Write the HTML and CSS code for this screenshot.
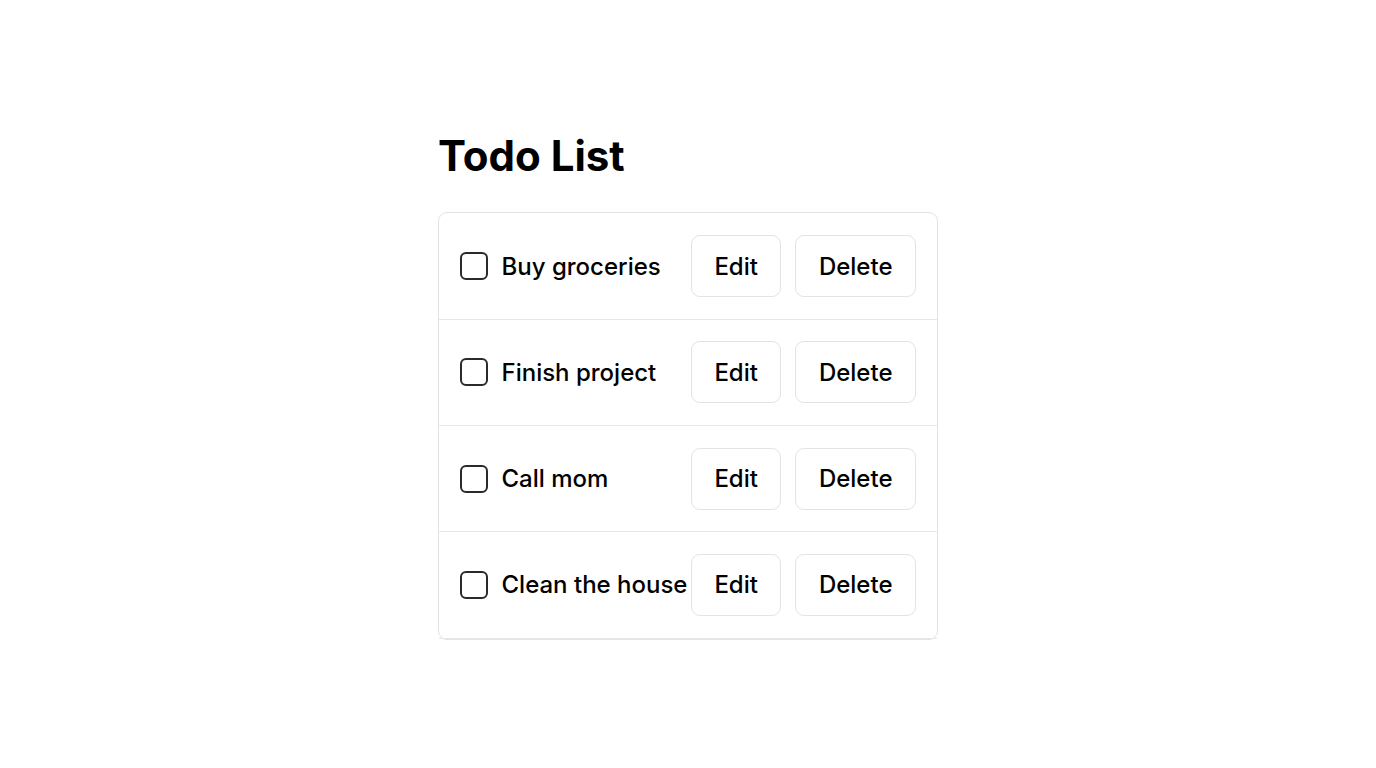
FILE: index.html
```html
<!DOCTYPE html>
<html>
<head>
<meta charset="utf-8">
<link rel="stylesheet" href="styles.css">
</head>
<body>
<main class="app">
  <h1 class="title">Todo List</h1>
  <ul class="list">
    <li class="item"><span class="check"></span><span class="label">Buy groceries</span><button class="btn">Edit</button><button class="btn">Delete</button></li>
    <li class="item"><span class="check"></span><span class="label">Finish project</span><button class="btn">Edit</button><button class="btn">Delete</button></li>
    <li class="item"><span class="check"></span><span class="label">Call mom</span><button class="btn">Edit</button><button class="btn">Delete</button></li>
    <li class="item"><span class="check"></span><span class="label">Clean the house</span><button class="btn">Edit</button><button class="btn">Delete</button></li>
  </ul>
</main>
</body>
</html>
```
FILE: styles.css
```css
* { box-sizing: border-box; }
html, body { margin: 0; padding: 0; background: #fff; }
body { font-family: Inter, "Noto Sans", sans-serif; color: #000; }
.app { width: 500px; margin: 0 auto; padding-top: 131px; }
.title { font-size: 42px; font-weight: 700; margin: 0 0 31px 0; line-height: 1.2; }
.list { list-style: none; margin: 0; padding: 0; border: 1.5px solid #e3e3e6; border-radius: 9px; }
.item { display: flex; align-items: center; padding: 0 21px 0 20.5px; border-bottom: 1.5px solid #e6e6e9; height: 106.3px; }
.check { width: 28px; height: 28px; border: 2px solid #2a2a2a; border-radius: 6px; flex: none; margin-right: 14px; }
.label { flex: 1; font-size: 24px; font-weight: 500; white-space: nowrap; }
.btn { font-family: inherit; font-size: 24px; font-weight: 500; background: #fff; border: 1.5px solid #e3e3e6; border-radius: 9px; height: 62px; padding: 0 22.5px; color: #000; margin-left: 14px; flex: none; }
.label + .btn { margin-left: 2px; }
```
